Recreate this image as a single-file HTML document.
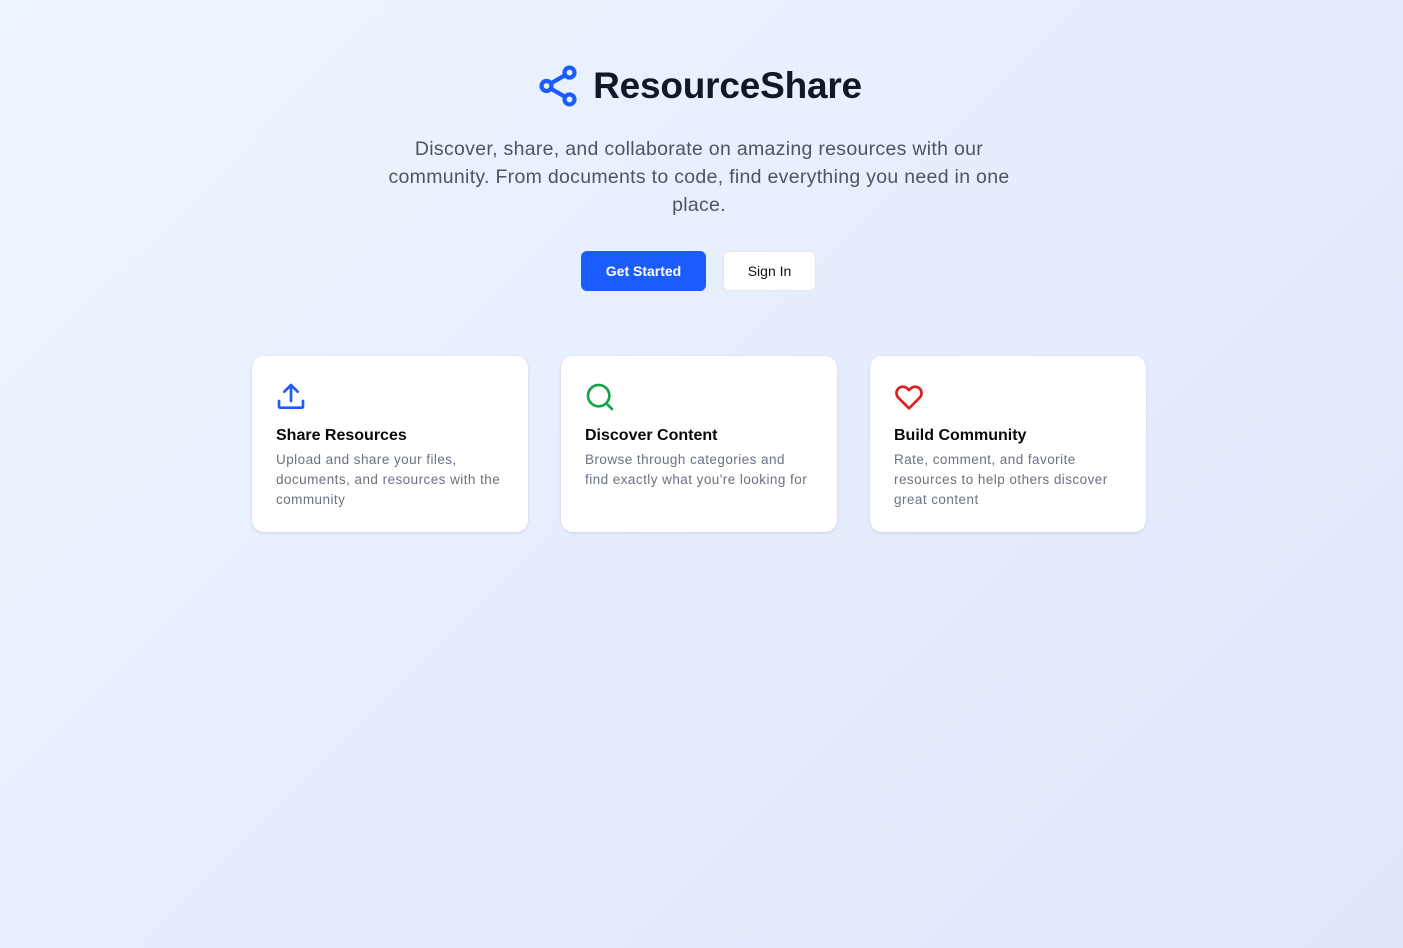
<!DOCTYPE html>
<html><head><meta charset="utf-8"><style>
*{margin:0;padding:0;box-sizing:border-box}
body{width:1403px;height:948px;overflow:hidden;font-family:"Liberation Sans",sans-serif;background:linear-gradient(135deg,#eef5ff 0%,#e6eefd 50%,#e0e6fc 100%);position:relative}
.logo{position:absolute;top:62px;left:-3px;width:1403px;display:flex;justify-content:center;align-items:center;gap:12px}
.logo h1{font-size:37px;font-weight:700;color:#111827;letter-spacing:-0.2px}
.sub{position:absolute;top:135px;left:300px;width:798px;text-align:center;font-size:19.5px;line-height:28px;color:#4b5563;white-space:nowrap;letter-spacing:0.3px}
.btns{position:absolute;top:251px;left:581px;display:flex;gap:17px}
.b1{width:125px;height:40px;background:#1a5cff;color:#fff;border-radius:6px;font-size:14px;font-weight:700;display:flex;align-items:center;justify-content:center}
.b2{width:93px;height:40px;background:#fff;color:#111;border:1px solid #e3e6ec;border-radius:6px;font-size:14px;display:flex;align-items:center;justify-content:center}
.card{position:absolute;top:356px;width:276px;height:176px;background:#fff;border-radius:12px;box-shadow:0 1px 3px rgba(0,0,0,.12);padding:25px 24px}
.card svg{display:block;width:32px;height:32px;margin-bottom:13px;margin-left:-1px}
.card h3{font-size:16px;font-weight:700;color:#0a0a0a;margin-bottom:4px;line-height:20px}
.card p{font-size:13.5px;line-height:20px;color:#6b7280;white-space:nowrap;letter-spacing:0.45px}
</style></head><body>
<div class="logo">
<svg width="46" height="48" viewBox="0 0 24 24" fill="none" stroke="#1a5cff" stroke-width="2.2" stroke-linecap="round"><circle cx="18" cy="5" r="2.6"/><circle cx="6" cy="12" r="2.6"/><circle cx="18" cy="19" r="2.6"/><path d="M8.3 13.4l7.4 4.2M15.7 6.4l-7.4 4.2"/></svg>
<h1>ResourceShare</h1></div>
<div class="sub">Discover, share, and collaborate on amazing resources with our<br>community. From documents to code, find everything you need in one<br>place.</div>
<div class="btns"><div class="b1">Get Started</div><div class="b2">Sign In</div></div>
<div class="card" style="left:252px"><svg viewBox="0 0 24 24" fill="none" stroke="#1a5cff" stroke-width="2" stroke-linecap="round" stroke-linejoin="round"><path d="M3 15v4a1 1 0 001 1h16a1 1 0 001-1v-4M12 3v12M7 8l5-5 5 5"/></svg><h3>Share Resources</h3><p>Upload and share your files,<br>documents, and resources with the<br>community</p></div>
<div class="card" style="left:561px"><svg viewBox="0 0 24 24" fill="none" stroke="#16a34a" stroke-width="2" stroke-linecap="round"><circle cx="11" cy="11" r="8"/><path d="M17 17l4 4"/></svg><h3>Discover Content</h3><p>Browse through categories and<br>find exactly what you're looking for</p></div>
<div class="card" style="left:870px"><svg viewBox="0 0 24 24" fill="none" stroke="#e11d1d" stroke-width="2" stroke-linejoin="round"><path d="M12 20.5l-8-8a4.8 4.8 0 016.8-6.8L12 6.9l1.2-1.2a4.8 4.8 0 016.8 6.8z"/></svg><h3>Build Community</h3><p>Rate, comment, and favorite<br>resources to help others discover<br>great content</p></div>
</body></html>
